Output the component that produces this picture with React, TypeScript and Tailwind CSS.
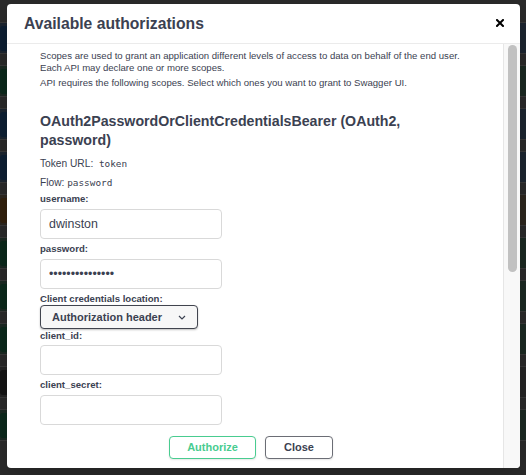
import React from "react";

const rows = [
  { color: "bg-[#0e2034]", tint: "bg-[#1d2631]" },
  { color: "bg-[#0c2a1c]", tint: "bg-[#1c2a23]" },
  { color: "bg-[#0e2034]", tint: "bg-[#1d2631]" },
  { color: "bg-[#0e2034]", tint: "bg-[#1d2631]" },
  { color: "bg-[#33220e]", tint: "bg-[#2e2820]" },
  { color: "bg-[#0c2a1c]", tint: "bg-[#1c2a23]" },
  { color: "bg-[#0c2a1c]", tint: "bg-[#1c2a23]" },
  { color: "bg-[#0c2a1c]", tint: "bg-[#1c2a23]" },
  { color: "bg-[#151515]", tint: "bg-[#262626]" },
  { color: "bg-[#0c2a1c]", tint: "bg-[#1c2a23]" },
];

const Label = ({ children, className = "" }: { children: React.ReactNode; className?: string }) => (
  <div className={`text-[9.6px] leading-[12px] font-bold text-[#3b4151] ${className}`}>{children}</div>
);

const TextBox = ({ value = "", type = "text", className = "" }: { value?: string; type?: string; className?: string }) => (
  <input
    type={type}
    defaultValue={value}
    readOnly
    className={`block w-[182px] h-[30px] rounded-[4px] border border-[#d9d9d9] bg-white pl-[8px] text-[12.4px] text-[#3b4151] outline-none ${className}`}
  />
);

export default function App() {
  return (
    <div className="relative w-[526px] h-[475px] overflow-hidden bg-[#2b2b2b] font-['Liberation_Sans',Arial,sans-serif]">
      {/* page behind the overlay */}
      <div className="flex flex-col gap-[11px] pt-[22px] px-0">
        {rows.map((row, index) => (
          <div key={index} className={`flex items-center h-[32px] border-y border-[#3a3a3a] ${row.tint}`}>
            <div className={`h-[25px] w-[60px] rounded-[3px] ${row.color}`} />
            <div className="ml-[150px] text-[11px] text-[#1b1b1b]">Token Login For Access Token</div>
          </div>
        ))}
      </div>

      {/* modal */}
      <div className="absolute left-[7px] top-[4px] w-[513px] h-[464px] flex flex-col rounded-[4px] bg-white shadow-[0_10px_30px_rgba(0,0,0,0.2)] overflow-hidden">
        <div className="flex items-center justify-between h-[40px] shrink-0 border-b border-[#ebebeb] pl-[17px] pr-[16px]">
          <h3 className="text-[15.7px] font-bold text-[#3b4151]">Available authorizations</h3>
          <svg width="8" height="8" viewBox="0 0 8 8" className="mt-[-2px]">
            <path d="M1 1 L7 7 M7 1 L1 7" stroke="#000" strokeWidth="2" strokeLinecap="square" />
          </svg>
        </div>

        <div className="flex flex-1 min-h-0">
          <div className="flex-1 pl-[33px] pr-[41px] pt-[6px] text-[#3b4151]">
            <p className="whitespace-nowrap text-[9.6px] leading-[12px]">
              Scopes are used to grant an application different levels of access to data on behalf of the end user.
              <br />
              Each API may declare one or more scopes.
            </p>
            <p className="mt-[3px] whitespace-nowrap text-[9.6px] leading-[12px]">
              API requires the following scopes. Select which ones you want to grant to Swagger UI.
            </p>

            <h4 className="mt-[23px] whitespace-nowrap text-[14.2px] leading-[19px] font-bold">
              OAuth2PasswordOrClientCredentialsBearer (OAuth2,
              <br />
              password)
            </h4>

            <p className="mt-[8px] text-[10.2px] leading-[12px]">
              Token URL:&nbsp; <code className="font-['DejaVu_Sans_Mono',monospace] text-[9.4px]">token</code>
            </p>
            <p className="mt-[7px] text-[10.2px] leading-[12px]">
              Flow: <code className="font-['DejaVu_Sans_Mono',monospace] text-[9.4px]">password</code>
            </p>

            <Label className="mt-[4px]">username:</Label>
            <TextBox value="dwinston" className="mt-[4px]" />

            <Label className="mt-[4px]">password:</Label>
            <TextBox value="secretsecret123" type="password" className="mt-[4px]" />

            <Label className="mt-[4px]">Client credentials location:</Label>
            <div className="flex items-center justify-between w-[158px] h-[24px] rounded-[4px] border border-[#41444e] bg-[#f7f7f7] pl-[11px] pr-[11px] shadow-[0_1px_2px_rgba(0,0,0,0.25)]">
              <span className="text-[11px] font-bold text-[#3b4151]">Authorization header</span>
              <svg width="8" height="5" viewBox="0 0 8 5">
                <path d="M1 1 L4 4 L7 1" fill="none" stroke="#3b4151" strokeWidth="1.2" />
              </svg>
            </div>

            <Label className="mt-[1px]">client_id:</Label>
            <TextBox className="mt-[3px]" />

            <Label className="mt-[4px]">client_secret:</Label>
            <TextBox className="mt-[4px]" />

            <div className="flex justify-center gap-[9px] mt-[11px]">
              <button className="w-[87px] h-[23px] rounded-[4px] border-[1.5px] border-[#49cc90] bg-white text-[11px] font-bold text-[#49cc90] shadow-[0_1px_2px_rgba(0,0,0,0.1)]">
                Authorize
              </button>
              <button className="w-[68px] h-[23px] rounded-[4px] border border-[#6b6d75] bg-white text-[11px] font-bold text-[#3b4151] shadow-[0_1px_2px_rgba(0,0,0,0.1)]">
                Close
              </button>
            </div>
          </div>

          <div className="w-[17px] shrink-0 border-l border-[#e6e6e6] bg-[#f8f8f8] pt-[1px]">
            <div className="mx-auto w-[9px] h-[227px] rounded-full bg-[#c1c1c1]" />
          </div>
        </div>
      </div>
    </div>
  );
}
